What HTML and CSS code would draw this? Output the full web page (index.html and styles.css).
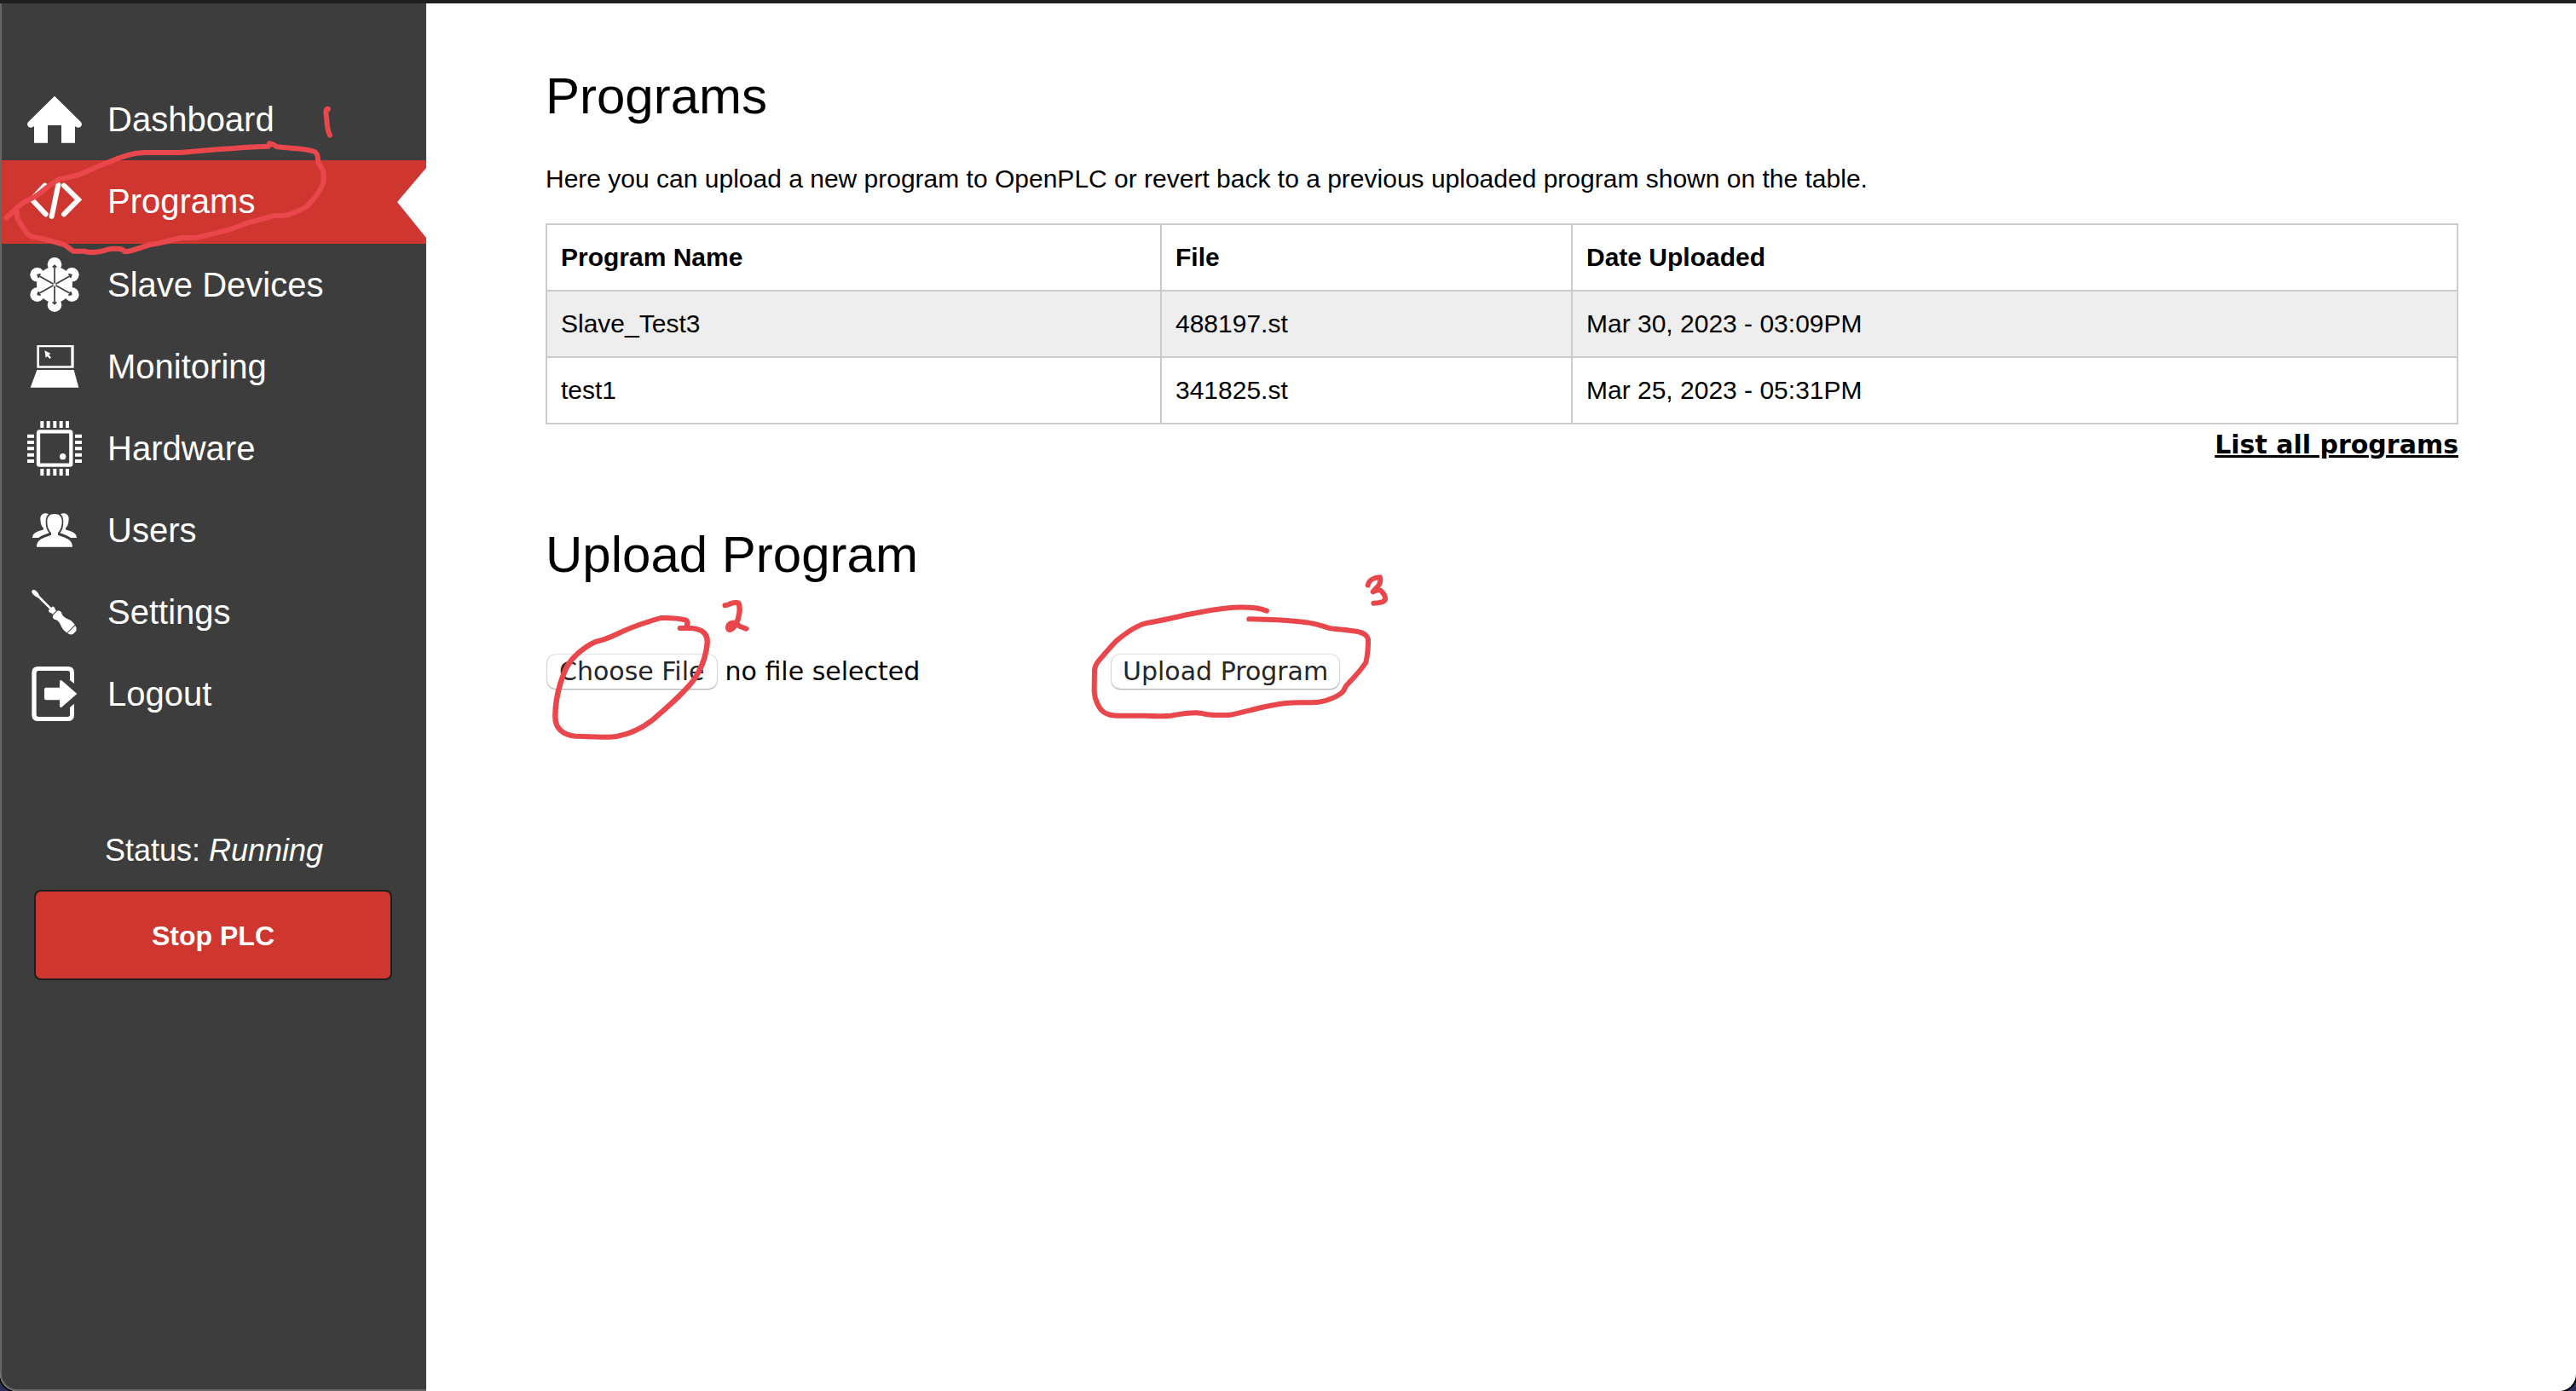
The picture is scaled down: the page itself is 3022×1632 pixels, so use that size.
FILE: index.html
```html
<!DOCTYPE html>
<html lang="en">
<head>
<meta charset="utf-8">
<title>OpenPLC - Programs</title>
<link rel="stylesheet" href="styles.css">
</head>
<body>
<div class="window">
  <aside class="sidebar">
    <nav class="menu">
      <a class="menu-item" href="#dashboard">
        <svg class="icon" viewBox="0 0 192 192" aria-hidden="true"><path d="M96 14 189 106q6 8-1 16-8 6-16 1l-4-3v59h-48v-62H72v62H24v-59l-4 3q-8 5-16-1-7-8-1-16z"/></svg>
        Dashboard
      </a>
      <a class="menu-item active" href="#programs">
        <svg class="icon" viewBox="0 0 192 192" aria-hidden="true"><g fill="none" stroke="#fff" stroke-width="18" stroke-linecap="round"><path d="M62 41 16 90l49 52M129 41l51 50-51 51M109 38 86 150"/></g></svg>
        Programs
        <svg class="pointer" viewBox="0 0 34 82" aria-hidden="true"><path d="M34 0 0 40l34 42z"/></svg>
        <svg class="mark mark-programs" viewBox="0 0 1560 690" aria-hidden="true">
          <path d="M1155 144Q1148 142 1147 152L1152 205Q1154 222 1161 236"/>
          <path d="M22 527 72 480Q90 467 118 455C150 437 175 405 212 390Q248 383 275 376C310 364 345 342 385 330Q450 300 505 297H635C720 289 830 279 945 275L948 265Q958 266 975 277C1030 283 1085 282 1109 295Q1120 303 1119 330C1127 347 1139 355 1139 378V395C1137 420 1100 465 1082 485C1065 497 1020 517 1000 519H965C940 526 910 535 882 541C850 550 825 565 800 570C765 578 720 591 685 597H640C600 604 570 617 530 621C500 628 465 645 440 646L430 638Q405 632 380 638C350 648 320 652 295 644H258C245 636 235 625 225 621C195 612 160 601 130 596Q105 593 95 582C85 565 65 540 60 523V508"/>
        </svg>
      </a>
      <a class="menu-item" href="#slave-devices">
        <svg class="icon" viewBox="0 0 192 192" aria-hidden="true">
          <circle cx="96" cy="96" r="63"/><circle cx="96" cy="25" r="25"/><circle cx="96" cy="167" r="25"/><circle cx="157" cy="61" r="25"/><circle cx="157" cy="131" r="25"/><circle cx="35" cy="61" r="25"/><circle cx="35" cy="131" r="25"/>
          <g fill="none" stroke="#3d3d3d" stroke-width="5"><path d="M96 28v136M36 62l120 68M36 130l120-68"/><path d="M89 35l7-7 7 7M89 157l7 7 7-7M47 59l-10 3 3 10M145 59l10 3-3 10M47 133l-10-3 3-10M145 133l10-3-3-10"/></g>
          <circle cx="96" cy="96" r="5"/>
        </svg>
        Slave Devices
      </a>
      <a class="menu-item" href="#monitoring">
        <svg class="icon" viewBox="0 0 192 192" aria-hidden="true"><path fill-rule="evenodd" d="M34 21h130v80H34zM42 28v66h112V28z"/><path d="M34 108h130l17 62H11zM61 40l21 10-6 5 8 10-5 4-8-9-6 5z"/></svg>
        Monitoring
      </a>
      <a class="menu-item" href="#hardware">
        <svg class="icon" viewBox="0 0 192 192" aria-hidden="true"><rect x="39" y="37" width="115" height="118" rx="4" fill="none" stroke="#fff" stroke-width="13"/><circle cx="125" cy="125" r="11"/><path d="M46 0h12v24H46zm22 0h12v24H68zm23 0h12v24H91zm22 0h12v24h-12zm22 0h12v24h-12zM46 168h12v24H46zm22 0h12v24H68zm23 0h12v24H91zm22 0h12v24h-12zm22 0h12v24h-12zM0 47h24v12H0zm0 22h24v12H0zm0 22h24v12H0zm0 22h24v12H0zm0 22h24v12H0zM168 47h24v12h-24zm0 22h24v12h-24zm0 22h24v12h-24zm0 22h24v12h-24zm0 22h24v12h-24z"/></svg>
        Hardware
      </a>
      <a class="menu-item" href="#users">
        <svg class="icon" viewBox="0 0 192 192" aria-hidden="true"><path d="M96 39c17 0 26 10 26 26 0 20-6 31-14 40v8c20 10 50 10 51 42H33c1-32 31-32 51-42v-8c-8-9-14-20-14-40 0-16 9-26 26-26z"/><path d="M75 39c-16-6-30 2-29 18 1 18 4 24 11 32v5c-12 6-38 7-39 29h21c10-8 24-12 38-17-8-10-12-22-12-38 0-14 3-22 10-29zM117 39c16-6 30 2 29 18-1 18-4 24-11 32v5c12 6 38 7 39 29h-21c-10-8-24-12-38-17 8-10 12-22 12-38 0-14-3-22-10-29z"/></svg>
        Users
      </a>
      <a class="menu-item" href="#settings">
        <svg class="icon" viewBox="0 0 192 192" aria-hidden="true"><g transform="translate(18 20) rotate(-45)"><path d="M-4 0h8q4 4 4 12 0 12-4 20v58h6q3 4 2 10l-3 4v6H-9v-6l-3-4q-1-6 2-10h6V32q-4-8-4-20 0-8 4-12zM-10 113h20c9 4 9 12 5 18-5 14 0 22 4 34 3 10 2 18 1 26h-40c-1-8-2-16 1-26 4-12 9-20 4-34-4-6-4-14 5-18zM-19 194h38c-1 8-5 14-12 16H-7c-7-2-11-8-12-16z"/></g></svg>
        Settings
      </a>
      <a class="menu-item" href="#logout">
        <svg class="icon" viewBox="0 0 192 192" aria-hidden="true"><path d="M165 60V22Q165 0 143 0H38Q16 0 16 22v148q0 22 22 22h105q22 0 22-22v-39l-15 13v25q0 8-8 8H40q-8 0-8-8V23q0-8 8-8h102q8 0 8 8v25z"/><path d="M66 74h48V54q0-8 7-5l54 47-54 47q-7 3-7-5v-20H66q-6 0-6-6V80q0-6 6-6z"/></svg>
        Logout
      </a>
    </nav>
    <p class="status">Status: <em>Running</em></p>
    <button class="stop" type="button">Stop PLC</button>
  </aside>

  <main class="content">
    <h1 class="title">Programs</h1>
    <p class="intro">Here you can upload a new program to OpenPLC or revert back to a previous uploaded program shown on the table.</p>
    <table class="programs">
      <colgroup><col class="col-name"><col class="col-file"><col></colgroup>
      <thead>
        <tr><th>Program Name</th><th>File</th><th>Date Uploaded</th></tr>
      </thead>
      <tbody>
        <tr><td>Slave_Test3</td><td>488197.st</td><td>Mar 30, 2023 - 03:09PM</td></tr>
        <tr><td>test1</td><td>341825.st</td><td>Mar 25, 2023 - 05:31PM</td></tr>
      </tbody>
    </table>
    <a class="list-all" href="#all-programs">List all programs</a>

    <h2 class="title upload-title">Upload Program</h2>
    <form class="upload">
      <div class="file-field">
        <input class="file-input" type="file" id="program-file">
        <label class="button file-button" for="program-file">Choose File</label>
        <span>no file selected</span>
      </div>
      <button class="button submit" type="submit">Upload Program</button>
      <svg class="mark mark-file" viewBox="0 0 1568 870" preserveAspectRatio="none" aria-hidden="true">
        <path d="M498 411H535C570 414 590 430 587 465C583 510 570 550 545 590C515 635 460 685 410 732C370 766 330 784 290 792Q275 795 240 794L155 791C110 788 88 760 88 725C87 680 95 640 105 605C118 560 130 530 160 502C180 483 200 468 220 459C245 453 265 445 290 432C340 405 385 390 435 375C470 374 500 378 515 382Q525 386 520 404"/>
        <path d="M646 331Q655 330 662 325Q683 318 690 323C697 340 693 375 680 400Q668 418 660 417C652 412 655 395 670 392Q682 392 695 405L715 413"/>
      </svg>
      <svg class="mark mark-submit" viewBox="0 0 1260 660" aria-hidden="true">
        <path d="M738 200C710 187 670 186 620 188C560 192 500 205 460 213C410 224 370 234 320 242C280 250 240 280 210 305C185 330 165 355 145 378Q134 392 132 408L131 485C133 515 148 545 165 557C180 568 195 569 220 569H310C350 571 380 571 400 569C430 564 480 556 505 560C530 568 560 568 600 567C625 566 650 556 680 550C720 540 760 529 805 525C850 522 880 523 920 521C960 517 1000 494 1008 482L1018 463C1040 440 1065 415 1087 382Q1095 345 1095 315V300C1090 275 1055 271 1030 269C1000 265 970 265 955 260C930 251 900 242 865 239C800 232 740 230 676 229"/>
        <path d="M1094 110C1098 90 1118 82 1137 82Q1142 100 1128 115L1112 133Q1135 122 1142 131C1152 140 1158 155 1154 163Q1145 173 1114 173"/>
      </svg>
    </form>
  </main>
</div>
</body>
</html>
```
FILE: styles.css
```css
* {
  box-sizing: border-box;
}

body {
  margin: 0;
  background: #2b3058;
  color: #000;
  font-family: "Liberation Sans", Arial, Helvetica, sans-serif;
  font-size: 30px;
  line-height: 36px;
}

h1, h2, p {
  margin: 0;
}

.window {
  display: flex;
  min-height: 100vh;
  border-top: 4px solid #1e1e1e;
  border-radius: 0 0 20px 20px;
  background: #fff;
  box-shadow: 0 0 0 2px #000;
}

/* Sidebar */

.sidebar {
  flex: 0 0 500px;
  padding-top: 88px;
  border: solid #666;
  border-width: 0 0 2px 2px;
  border-bottom-left-radius: 20px;
  background: #3d3d3d;
  color: #fff;
}

.menu {
  display: flex;
  flex-direction: column;
}

.menu-item {
  position: relative;
  display: flex;
  align-items: center;
  gap: 30px;
  height: 96px;
  padding-left: 30px;
  color: #fff;
  font-size: 40px;
  line-height: 48px;
  text-decoration: none;
}

.menu-item.active {
  z-index: 1;
  height: 98px;
  padding-bottom: 2px;
  background: #cf362f;
}

.icon {
  width: 64px;
  height: 64px;
  fill: #fff;
}

.pointer {
  width: 34px;
  height: 82px;
  margin: 4px 0 0 auto;
  fill: #fff;
}

.status {
  margin-top: 116px;
  font-size: 36px;
  line-height: 40px;
  text-align: center;
}

.stop {
  display: block;
  width: 420px;
  height: 106px;
  margin: 26px 0 0 38px;
  padding: 2px 0 0;
  border: 2px solid #1e1e1e;
  border-radius: 8px;
  background: #cf362f;
  color: #fff;
  font: bold 32px/40px "Liberation Sans", Arial, sans-serif;
}

/* Content */

.content {
  flex: 1;
  min-width: 0;
  padding: 75px 138px 75px 140px;
}

.title {
  font-size: 60px;
  font-weight: normal;
  line-height: 68px;
}

.intro {
  margin-top: 45px;
}

.programs {
  width: 100%;
  margin-top: 34px;
  border-collapse: collapse;
  table-layout: fixed;
}

.col-name {
  width: 721px;
}

.col-file {
  width: 482px;
}

.programs th,
.programs td {
  padding: 20px 16px;
  border: 2px solid #ccc;
  text-align: left;
}

.programs tbody tr:nth-child(odd) {
  background: #eee;
}

.list-all {
  display: block;
  width: fit-content;
  margin: 6px 0 0 auto;
  color: #000;
  font-family: "DejaVu Sans", Verdana, sans-serif;
  font-weight: bold;
}

.upload-title {
  margin-top: 77px;
}

.upload {
  position: relative;
  display: flex;
  margin-top: 83px;
  font-family: "DejaVu Sans", Verdana, sans-serif;
  line-height: 40px;
}

.file-field {
  position: relative;
  display: flex;
  gap: 10px;
  width: 664px;
}

/* The label stands in for the native file picker button */
.file-input {
  position: absolute;
  width: 1px;
  height: 1px;
  opacity: 0;
}

.button {
  height: 40px;
  padding: 0 13px;
  border: 0;
  border-radius: 10px;
  background: #fff;
  box-shadow: 0 0 1px 1px rgba(0, 0, 0, 0.1), 0 1px 2px rgba(0, 0, 0, 0.3);
  color: #262626;
  font: inherit;
}

.file-button {
  padding: 0 14px;
  margin-left: 2px;
}

/* Hand-drawn marks over the page */

.mark {
  position: absolute;
  fill: none;
  stroke: #e9474c;
  stroke-width: 18;
  stroke-linecap: round;
  stroke-linejoin: round;
  pointer-events: none;
}

.mark-programs {
  top: -108px;
  left: -2px;
  width: 520px;
  height: 230px;
}

.mark-file {
  top: -168px;
  left: -20px;
  width: 560px;
  height: 290px;
}

.mark-submit {
  top: -118px;
  left: 600px;
  width: 420px;
  height: 220px;
}
```
